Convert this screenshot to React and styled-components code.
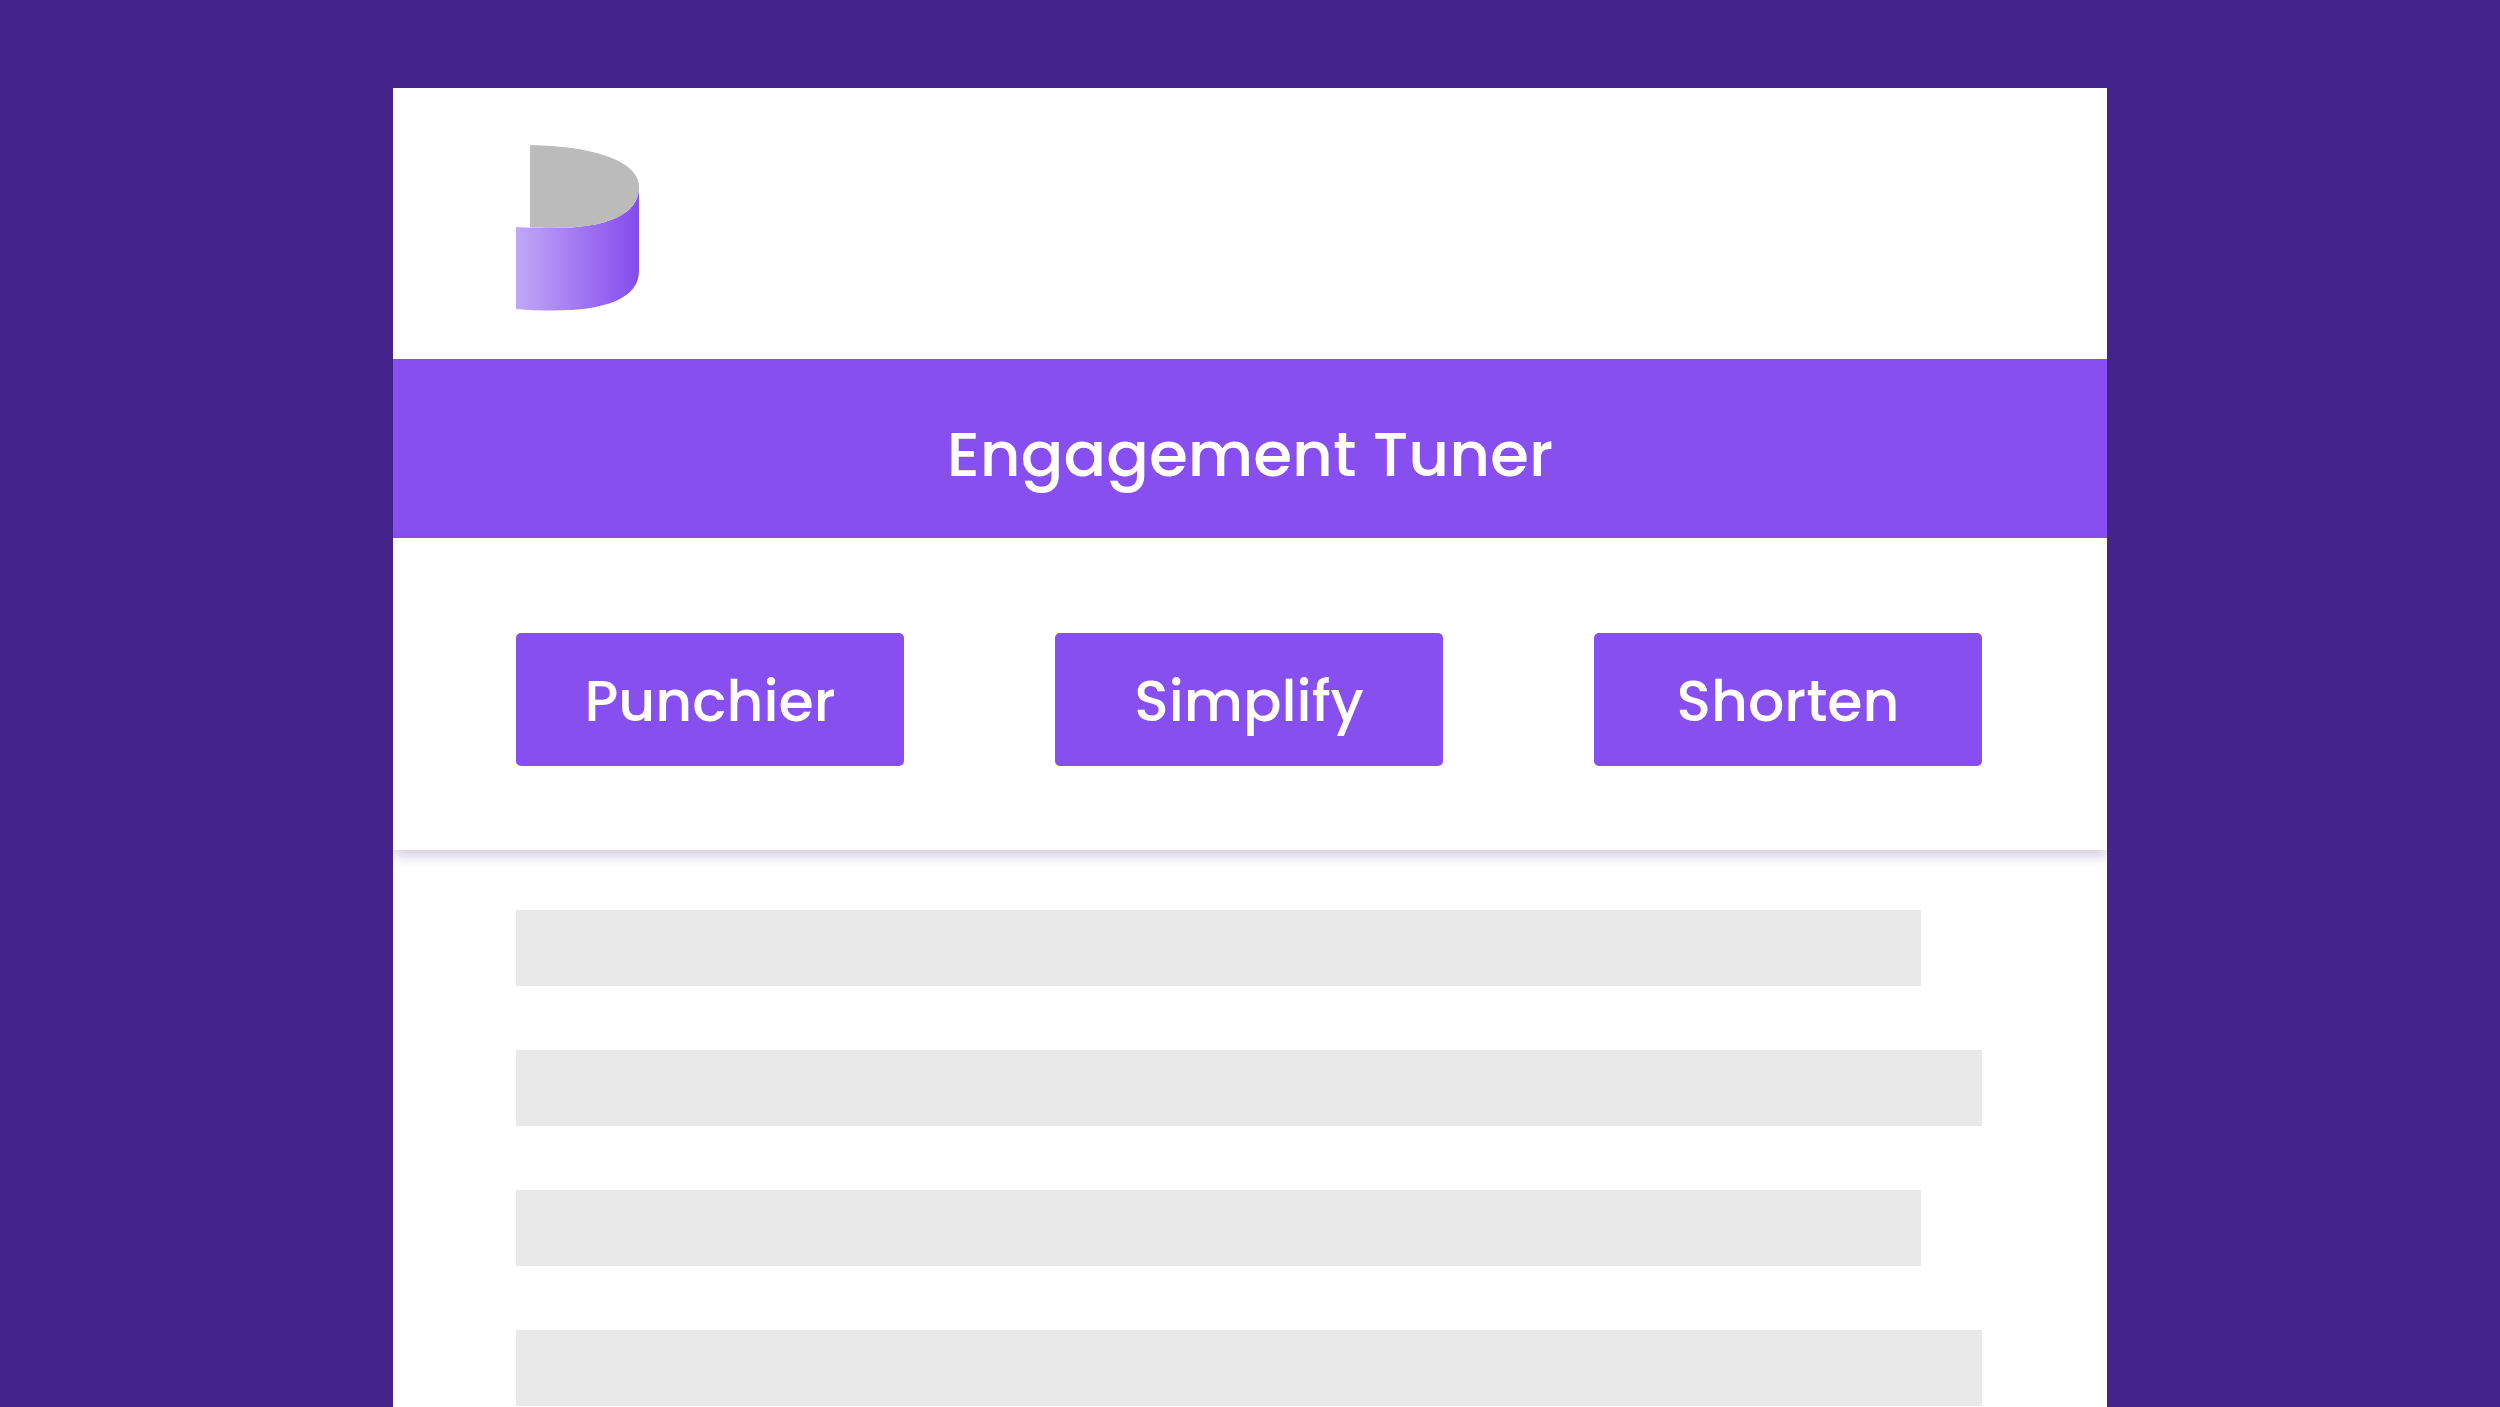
import React from 'react'
import styled, { createGlobalStyle, ThemeProvider } from 'styled-components'

const theme = {
  colors: {
    backdrop: '#44248a',
    primary: '#874ff0',
    sheet: '#ffffff',
    placeholder: '#e9e9e9',
  },
  gutter: '125px',
  gutterStart: '123px',
}

const GlobalStyle = createGlobalStyle`
  * {
    box-sizing: border-box;
  }

  body {
    margin: 0;
    font-family: Poppins, Inter, sans-serif;
    font-weight: 500;
    background: ${theme.colors.backdrop};
  }
`

const Page = styled.div`
  display: flex;
  justify-content: center;
  min-height: 100vh;
  padding-top: 88px;
`

const Sheet = styled.main`
  width: 90%;
  max-width: 1714px;
  background: ${({ theme }) => theme.colors.sheet};
  overflow: hidden;
`

const Section = styled.div`
  padding-left: ${({ theme }) => theme.gutterStart};
  padding-right: ${({ theme }) => theme.gutter};
`

const Header = styled(Section)`
  padding-top: 57px;
  padding-bottom: 48px;
`

const StyledLogo = styled.svg`
  display: block;
  width: 123px;
  height: 166px;
`

const Banner = styled.h1`
  margin: 0;
  padding: 55px 24px 44px;
  color: #fff;
  background: ${({ theme }) => theme.colors.primary};
  font-size: 63px;
  font-weight: 500;
  line-height: 80px;
  text-align: center;
`

const Toolbar = styled(Section)`
  display: flex;
  flex-wrap: wrap;
  gap: 32px;
  justify-content: space-between;
  padding-top: 95px;
  padding-bottom: 84px;
  box-shadow: 0 6px 12px rgba(68, 36, 138, 0.24);
`

const ToolButton = styled.button`
  width: 388px;
  padding: 33px 24px 30px;
  border: 0;
  border-radius: 5px;
  color: #fff;
  background: ${({ theme }) => theme.colors.primary};
  font: inherit;
  font-size: 57px;
  line-height: 70px;
  cursor: pointer;
`

const Lines = styled(Section)`
  display: grid;
  gap: 64px;
  padding-top: 60px;
`

const Line = styled.div`
  height: 76px;
  margin-right: ${({ $short }) => ($short ? 61 : 0)}px;
  background: ${({ theme }) => theme.colors.placeholder};
`

const tools = ['Punchier', 'Simplify', 'Shorten']

const lines = [
  { id: 1, short: true },
  { id: 2, short: false },
  { id: 3, short: true },
  { id: 4, short: false },
]

function Logo() {
  return (
    <StyledLogo viewBox="0 0 123 166" aria-hidden="true">
      <defs>
        <linearGradient id="ribbon" x1="0" y1="0" x2="1" y2="0">
          <stop offset="0" stopColor="#c1a7f7" />
          <stop offset="1" stopColor="#854bee" />
        </linearGradient>
      </defs>
      <path
        fill="url(#ribbon)"
        d="M0 82C12 83 25 83 37 83C90 83 123 70 123 42V126C123 153 90 165.5 37 165.5C25 165.5 12 165 0 164Z"
      />
      <path
        fill="#bbb"
        d="M14 0.3C80 1 123 17 123 42C123 70 90 83 37 83C29 83 21 83 14 82.6Z"
      />
    </StyledLogo>
  )
}

export function App() {
  return (
    <ThemeProvider theme={theme}>
      <GlobalStyle />
      <Page>
        <Sheet>
          <Header as="header">
            <Logo />
          </Header>
          <Banner>Engagement Tuner</Banner>
          <Toolbar>
            {tools.map(tool => (
              <ToolButton key={tool} type="button">
                {tool}
              </ToolButton>
            ))}
          </Toolbar>
          <Lines>
            {lines.map(({ id, short }) => (
              <Line key={id} $short={short} />
            ))}
          </Lines>
        </Sheet>
      </Page>
    </ThemeProvider>
  )
}

export default App
